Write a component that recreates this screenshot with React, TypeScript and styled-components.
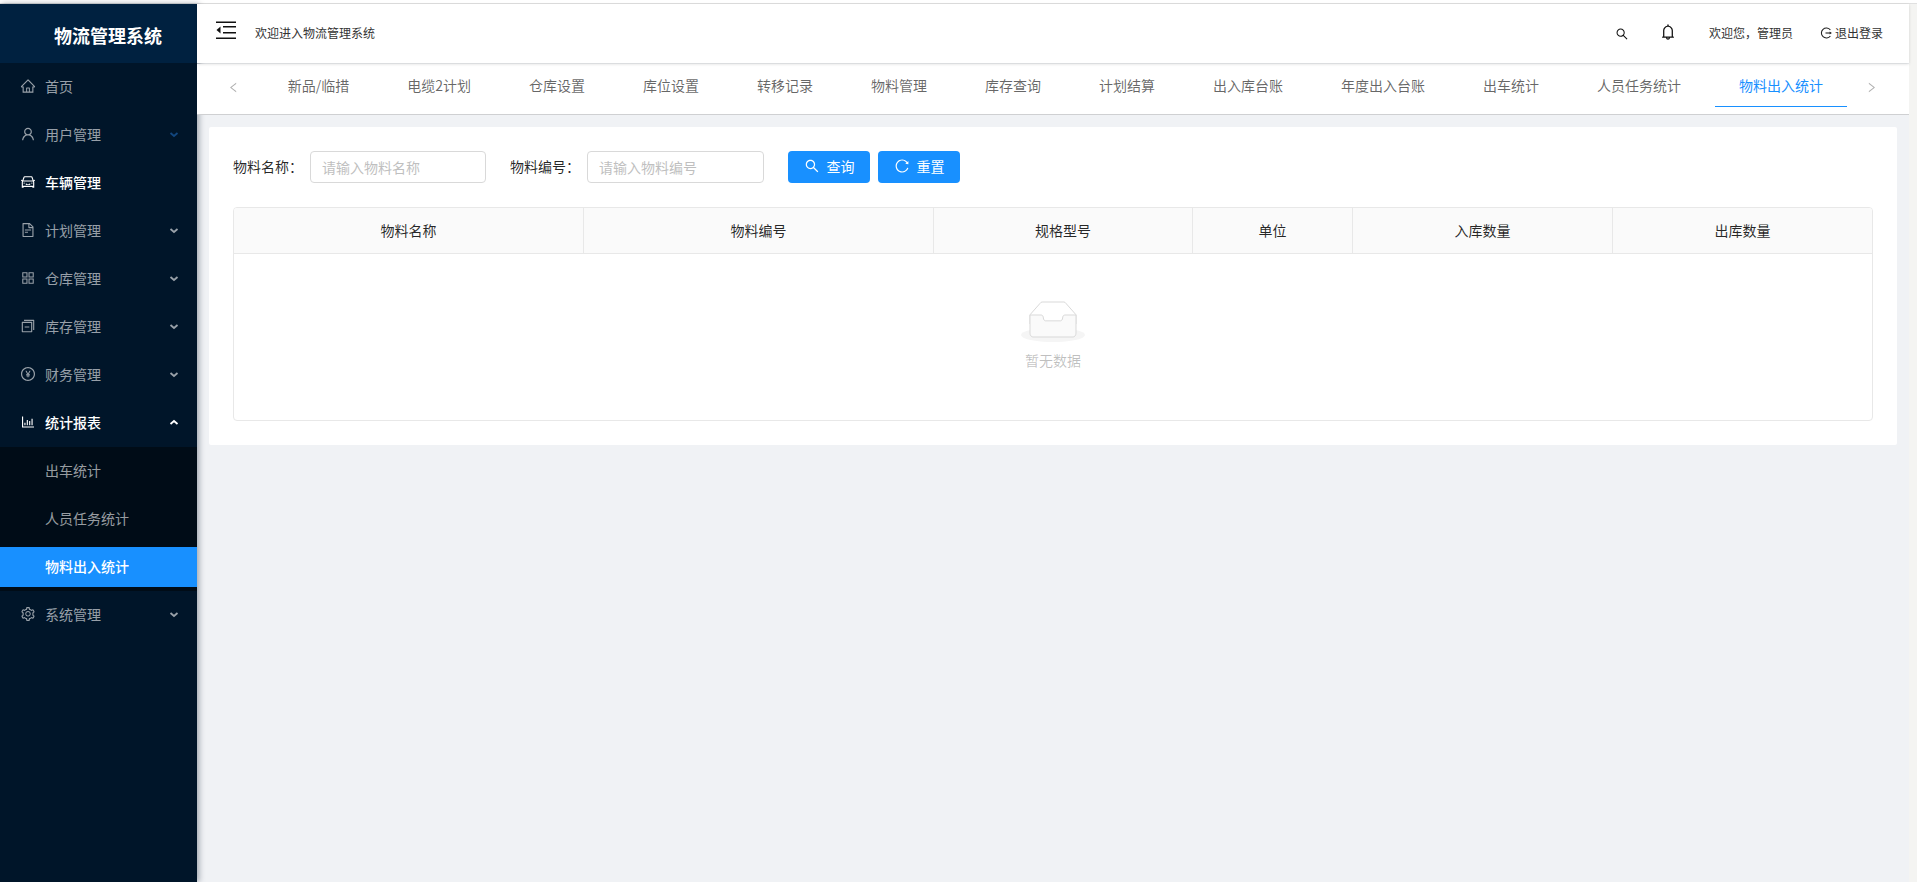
import React from "react";
import styled, { createGlobalStyle } from "styled-components";
import {
  AiOutlineAppstore,
  AiOutlineBarChart,
  AiOutlineBell,
  AiOutlineCar,
  AiOutlineFileText,
  AiOutlineHome,
  AiOutlineLeft,
  AiOutlinePayCircle,
  AiOutlineReload,
  AiOutlineRight,
  AiOutlineSearch,
  AiOutlineSetting,
  AiOutlineSwitcher,
  AiOutlineUser,
} from "react-icons/ai";

const GlobalStyle = createGlobalStyle`
  html, body {
    margin: 0;
    height: 100%;
    overflow: hidden;
    background: #fff;
    font-family: "Noto Sans CJK SC", "Liberation Sans", sans-serif;
  }
  * {
    box-sizing: border-box;
  }
`;

const Page = styled.div`
  height: 882px;
  padding-top: 3px;
  display: flex;
  flex-direction: column;
`;

const Frame = styled.div`
  flex: 1;
  min-height: 0;
  display: grid;
  grid-template-columns: 197px 1fr 8px;
  border-top: 1px solid #e0e0e0;
`;

const Sidebar = styled.aside`
  background: #001529;
  box-shadow: 2px 0 6px rgba(0, 21, 41, 0.35);
  position: relative;
  z-index: 1;
`;

const Logo = styled.div`
  height: 59px;
  background: #002140;
  color: #fff;
  font-size: 18px;
  font-weight: 700;
  line-height: 62px;
  padding-left: 54px;
`;

const Menu = styled.nav`
  padding-top: 4px;
`;

const MenuItem = styled.div<{ $active?: boolean }>`
  height: 40px;
  margin-bottom: 8px;
  padding: 0 18px 2px 20px;
  display: flex;
  align-items: center;
  gap: 9px;
  font-size: 14px;
  color: ${(p) => (p.$active ? "#fff" : "rgba(255, 255, 255, 0.6)")};
  font-weight: ${(p) => (p.$active ? 500 : 400)};

  & > svg:first-child {
    flex: none;
  }
`;

const MenuLabel = styled.span`
  flex: 1;
`;

const SubMenu = styled.div`
  background: #000c17;
  margin: -4px 0 4px;
  padding: 4px 0;
`;

const SubItem = styled.div<{ $selected?: boolean }>`
  height: 40px;
  padding-left: 45px;
  line-height: 38px;
  font-size: 14px;
  margin-bottom: ${(p) => (p.$selected ? 0 : "8px")};
  color: ${(p) => (p.$selected ? "#fff" : "rgba(255, 255, 255, 0.6)")};
  font-weight: ${(p) => (p.$selected ? 500 : 400)};
  background: ${(p) => (p.$selected ? "#1890ff" : "transparent")};
`;

const Main = styled.main`
  background: #f0f2f5;
  min-width: 0;
`;

const TopBar = styled.header`
  height: 59px;
  background: #fff;
  box-shadow: 0 1px 3px rgba(0, 0, 0, 0.14);
  position: relative;
  z-index: 3;
  display: flex;
  align-items: center;
  padding: 0 26px 2px 19px;
  font-size: 12px;
  color: #333;
`;

const FoldTrigger = styled.span`
  display: flex;
  margin-bottom: 5px;
`;

const Welcome = styled.span`
  margin-left: 19px;
  flex: 1;
`;

const TopActions = styled.div`
  display: flex;
  align-items: center;
`;

const ActionIcon = styled.span<{ $gap: number; $shift: number }>`
  display: flex;
  margin-right: ${(p) => p.$gap}px;
  margin-top: ${(p) => p.$shift}px;
  color: #111;
`;

const Logout = styled.span`
  display: flex;
  align-items: center;
  gap: 3px;
  margin-left: 27px;
`;

const TabBar = styled.div`
  height: 51px;
  margin-top: 1px;
  background: #fff;
  border-bottom: 1px solid #cfd0d2;
  position: relative;
  z-index: 2;
  display: flex;
`;

const TabArrow = styled.span<{ $width: number; $left: number }>`
  flex: none;
  width: ${(p) => p.$width}px;
  padding-left: ${(p) => p.$left}px;
  display: flex;
  align-items: center;
  color: #b0b0b0;
  height: 46px;
`;

const TabList = styled.div`
  flex: 1;
  min-width: 0;
  display: flex;
  justify-content: flex-end;
  gap: 10px;
  overflow: hidden;
`;

const Tab = styled.div<{ $active?: boolean }>`
  flex: none;
  height: 43px;
  padding: 0 24px;
  line-height: 42px;
  font-size: 14px;
  white-space: nowrap;
  color: ${(p) => (p.$active ? "#1890ff" : "rgba(0, 0, 0, 0.6)")};
  border-bottom: ${(p) => (p.$active ? "1px solid #1890ff" : "none")};
`;

const Card = styled.section`
  margin: 12px;
  padding: 24px;
  background: #fff;
  border-radius: 2px;
`;

const SearchForm = styled.form`
  display: flex;
  align-items: center;
  margin-bottom: 24px;
`;

const FieldLabel = styled.label`
  width: 77px;
  font-size: 14px;
  line-height: 30px;
  height: 32px;
  color: rgba(0, 0, 0, 0.85);
`;

const TextInput = styled.input<{ $width: number }>`
  width: ${(p) => p.$width}px;
  height: 32px;
  margin-right: 24px;
  padding: 0 11px 1px;
  border: 1px solid #d9d9d9;
  border-radius: 4px;
  font: inherit;
  font-size: 14px;
  outline: none;

  &::placeholder {
    color: #bfbfbf;
  }
`;

const PrimaryButton = styled.button`
  width: 82px;
  height: 32px;
  margin-right: 8px;
  padding: 0 0 2px;
  border: none;
  border-radius: 4px;
  background: #1890ff;
  color: #fff;
  font: inherit;
  font-size: 14px;
  display: flex;
  align-items: center;
  justify-content: center;
  gap: 7px;
`;

const TableFrame = styled.div`
  border: 1px solid #e8e8e8;
  border-radius: 4px;
  overflow: hidden;
`;

const DataTable = styled.table`
  width: 100%;
  table-layout: fixed;
  border-collapse: separate;
  border-spacing: 0;
`;

const HeadCell = styled.th`
  height: 46px;
  padding: 0 0 2px;
  background: #fafafa;
  border-bottom: 1px solid #e8e8e8;
  border-right: 1px solid #e8e8e8;
  font-size: 14px;
  font-weight: 400;
  text-align: center;
  color: rgba(0, 0, 0, 0.85);

  &:last-child {
    border-right: none;
  }
`;

const EmptyCell = styled.td`
  height: 166px;
  padding: 0;
  text-align: center;
  vertical-align: top;
`;

const EmptyBox = styled.div`
  padding-top: 47px;
  display: flex;
  flex-direction: column;
  align-items: center;
  gap: 7px;
  font-size: 14px;
  line-height: 22px;
  color: rgba(0, 0, 0, 0.25);
`;

const ScrollTrack = styled.div`
  background: #f4f4f2;
`;

const Chevron = ({ up, color = "currentColor" }: { up?: boolean; color?: string }) => (
  <svg width="10" height="7" viewBox="0 0 10 7" fill="none">
    <path
      d={up ? "M1.5 5L5 2l3.5 3" : "M1.5 2L5 5l3.5-3"}
      stroke={color}
      strokeWidth="1.8"
    />
  </svg>
);

const FoldIcon = () => (
  <svg width="20" height="20" viewBox="0 0 20 20">
    <path d="M0 1.5h20v1.6H0zM0 17.5h20v1.6H0zM7 6h13v1.4H7zM7 12h13v1.4H7z" fill="#111" />
    <path d="M4.5 6.5v7L0.5 10z" fill="#111" />
  </svg>
);

const LogoutIcon = () => (
  <svg width="12" height="12" viewBox="0 0 12 12" fill="none">
    <path d="M10.4 3A5 5 0 1 0 10.4 9" stroke="#222" strokeWidth="1.1" />
    <path d="M5.5 6h5.8" stroke="#222" strokeWidth="1.1" />
    <path d="M9.6 4.4L11.5 6 9.6 7.6z" fill="#222" />
  </svg>
);

const EmptyIcon = () => (
  <svg width="64" height="41" viewBox="0 0 64 41">
    <g transform="translate(0 1)" fill="none" fillRule="evenodd">
      <ellipse fill="#F5F5F5" cx="32" cy="33" rx="32" ry="7" />
      <g fillRule="nonzero" stroke="#D9D9D9">
        <path d="M55 12.76L44.854 1.258C44.367.474 43.656 0 42.907 0H21.093c-.749 0-1.46.474-1.947 1.257L9 12.761V22h46v-9.24z" />
        <path
          d="M41.613 15.931c0-1.605.994-2.93 2.227-2.931H55v18.137C55 33.26 53.68 35 52.05 35h-40.1C10.32 35 9 33.259 9 31.137V13h11.16c1.233 0 2.227 1.323 2.227 2.928v.022c0 1.605 1.005 2.901 2.237 2.901h14.752c1.232 0 2.237-1.308 2.237-2.913v-.007z"
          fill="#FAFAFA"
        />
      </g>
    </g>
  </svg>
);

const tabs = [
  "新品/临措",
  "电缆2计划",
  "仓库设置",
  "库位设置",
  "转移记录",
  "物料管理",
  "库存查询",
  "计划结算",
  "出入库台账",
  "年度出入台账",
  "出车统计",
  "人员任务统计",
  "物料出入统计",
];

const columns = [
  { title: "物料名称", width: 350 },
  { title: "物料编号", width: 350 },
  { title: "规格型号", width: 259 },
  { title: "单位", width: 160 },
  { title: "入库数量", width: 260 },
  { title: "出库数量", width: 259 },
];

export default function App() {
  return (
    <Page>
      <GlobalStyle />
      <Frame>
        <Sidebar>
          <Logo>物流管理系统</Logo>
          <Menu>
            <MenuItem>
              <AiOutlineHome size={16} />
              <MenuLabel>首页</MenuLabel>
            </MenuItem>
            <MenuItem>
              <AiOutlineUser size={16} />
              <MenuLabel>用户管理</MenuLabel>
              <Chevron color="#12477f" />
            </MenuItem>
            <MenuItem $active>
              <AiOutlineCar size={16} />
              <MenuLabel>车辆管理</MenuLabel>
            </MenuItem>
            <MenuItem>
              <AiOutlineFileText size={16} />
              <MenuLabel>计划管理</MenuLabel>
              <Chevron />
            </MenuItem>
            <MenuItem>
              <AiOutlineAppstore size={16} />
              <MenuLabel>仓库管理</MenuLabel>
              <Chevron />
            </MenuItem>
            <MenuItem>
              <AiOutlineSwitcher size={16} />
              <MenuLabel>库存管理</MenuLabel>
              <Chevron />
            </MenuItem>
            <MenuItem>
              <AiOutlinePayCircle size={16} />
              <MenuLabel>财务管理</MenuLabel>
              <Chevron />
            </MenuItem>
            <MenuItem $active>
              <AiOutlineBarChart size={16} />
              <MenuLabel>统计报表</MenuLabel>
              <Chevron up />
            </MenuItem>
            <SubMenu>
              <SubItem>出车统计</SubItem>
              <SubItem>人员任务统计</SubItem>
              <SubItem $selected>物料出入统计</SubItem>
            </SubMenu>
            <MenuItem>
              <AiOutlineSetting size={16} />
              <MenuLabel>系统管理</MenuLabel>
              <Chevron />
            </MenuItem>
          </Menu>
        </Sidebar>
        <Main>
          <TopBar>
            <FoldTrigger>
              <FoldIcon />
            </FoldTrigger>
            <Welcome>欢迎进入物流管理系统</Welcome>
            <TopActions>
              <ActionIcon $gap={30} $shift={2}>
                <AiOutlineSearch size={14} />
              </ActionIcon>
              <ActionIcon $gap={32} $shift={-2}>
                <AiOutlineBell size={18} />
              </ActionIcon>
              <span>欢迎您，管理员</span>
              <Logout>
                <LogoutIcon />
                退出登录
              </Logout>
            </TopActions>
          </TopBar>
          <TabBar>
            <TabArrow $width={66} $left={30}>
              <AiOutlineLeft size={13} />
            </TabArrow>
            <TabList>
              {tabs.map((tab) => (
                <Tab key={tab} $active={tab === "物料出入统计"}>
                  {tab}
                </Tab>
              ))}
            </TabList>
            <TabArrow $width={62} $left={18}>
              <AiOutlineRight size={13} />
            </TabArrow>
          </TabBar>
          <Card>
            <SearchForm>
              <FieldLabel>物料名称：</FieldLabel>
              <TextInput $width={176} placeholder="请输入物料名称" />
              <FieldLabel>物料编号：</FieldLabel>
              <TextInput $width={177} placeholder="请输入物料编号" />
              <PrimaryButton type="button">
                <AiOutlineSearch size={16} />
                查询
              </PrimaryButton>
              <PrimaryButton type="button">
                <AiOutlineReload size={16} />
                重置
              </PrimaryButton>
            </SearchForm>
            <TableFrame>
              <DataTable>
                <colgroup>
                  {columns.map((col) => (
                    <col key={col.title} width={col.width} />
                  ))}
                </colgroup>
                <thead>
                  <tr>
                    {columns.map((col) => (
                      <HeadCell key={col.title}>{col.title}</HeadCell>
                    ))}
                  </tr>
                </thead>
                <tbody>
                  <tr>
                    <EmptyCell colSpan={columns.length}>
                      <EmptyBox>
                        <EmptyIcon />
                        暂无数据
                      </EmptyBox>
                    </EmptyCell>
                  </tr>
                </tbody>
              </DataTable>
            </TableFrame>
          </Card>
        </Main>
        <ScrollTrack />
      </Frame>
    </Page>
  );
}
